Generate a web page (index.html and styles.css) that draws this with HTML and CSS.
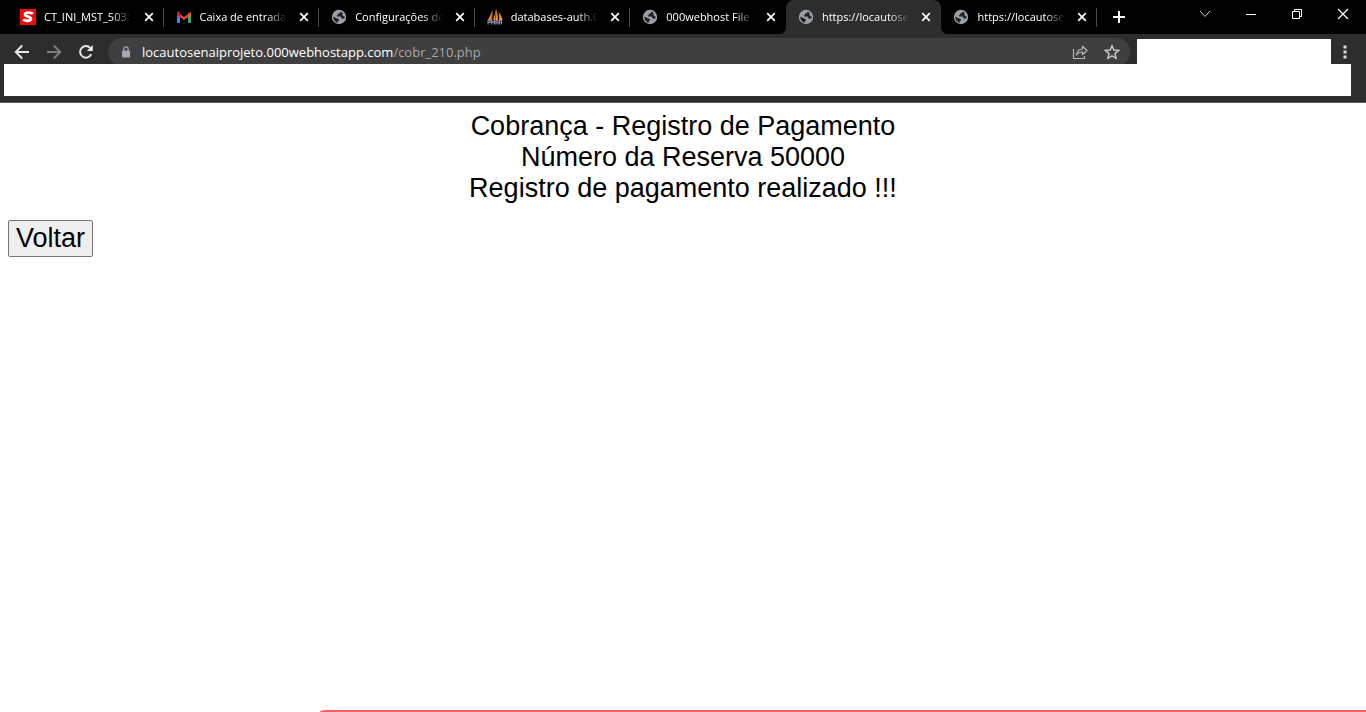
FILE: index.html
```html
<!DOCTYPE html>
<html lang="pt-BR">
<head>
<meta charset="utf-8">
<title>Cobrança - Registro de Pagamento</title>
<link rel="stylesheet" href="styles.css">
</head>
<body>
<svg class="defs" aria-hidden="true">
  <symbol id="globe" viewBox="0 0 16 16">
    <circle cx="8" cy="8" r="7.200" fill="#9aa0a6"/>
    <path d="M9.500 2.600L9 4.200 7 4.600 6.800 6 5.600 6.800 6.400 7.600h3.200l1 1.800 1.300.4 1.600-.6.200-1.600-1.300-.3-1-1.300.3-1.500L10.600 3z" fill="#202124"/>
    <path d="M2.400 7.600L5.500 9.300l2.200.6.300 1.800-1.300.6v1.500C4.200 13.200 2.100 10.800 2.400 7.600z" fill="#202124"/>
  </symbol>
  <symbol id="cross" viewBox="0 0 10 10"><path d="M1.200 1.200l7.600 7.600M8.800 1.200L1.200 8.800" stroke="#fff" stroke-width="1.700"/></symbol>
</svg>

<header class="browser">
  <div class="strip">
    <div class="tabs">
      <div class="tab">
        <svg class="favicon" viewBox="0 0 16 16"><rect width="16" height="16" fill="#f00a0a"/><path d="M12.900 4.700C11.600 3.600 5.500 2.500 5 5.300c-.4 2.800 6.400 2 5.900 4.700-.4 2.500-5.900 2-7.700.5" fill="none" stroke="#fff" stroke-width="2.800"/></svg>
        <span class="title">CT_INI_MST_503:</span>
        <button class="close" aria-label="Fechar"><svg><use href="#cross"/></svg></button>
      </div>
      <div class="tab">
        <svg class="favicon" viewBox="0 0 16 16"><path d="M1 4h3v10H2q-1 0-1-1z" fill="#4285f4"/><path d="M12 4h3v9q0 1-1 1h-2z" fill="#34a853"/><path d="M12 5l3-2v3.500l-3 2z" fill="#fbbc04"/><path d="M4 5l4 3 4-3 1.500-1.500q1.500-.5 1.500 1v1.500l-7 5-4-3z" fill="#ea4335"/><path d="M1 4q0-2 2-1.500L4 3.400v5.200L1 6.500z" fill="#c5221f"/></svg>
        <span class="title">Caixa de entrada</span>
        <button class="close" aria-label="Fechar"><svg><use href="#cross"/></svg></button>
      </div>
      <div class="tab">
        <svg class="favicon"><use href="#globe"/></svg>
        <span class="title">Configurações de</span>
        <button class="close" aria-label="Fechar"><svg><use href="#cross"/></svg></button>
      </div>
      <div class="tab">
        <svg class="favicon" viewBox="0 0 16 16"><path d="M5.500 1.500L1 11h3.800zM9 .5c-1 4-2 7-3 10.500h5C11 7 10.500 4 9 .5zM11.500 3c.7 3 .8 5 .5 8h3.500C15 8 13.500 5 11.500 3z" fill="#f08c22"/><path d="M5.500 1.500L4.800 11M9 .5L8.300 11" stroke="#6b4a2a" fill="none"/><path d="M1 15.500v-4h2.200v2H1M4.600 15.500v-4l1.500 2 1.500-2v4M9 15.500v-4h2v4M9 13.500h2M12.500 15.500v-4h2v4M12.500 13.500h2" fill="none" stroke="#8a8aac" stroke-width="1.100"/></svg>
        <span class="title">databases-auth.0</span>
        <button class="close" aria-label="Fechar"><svg><use href="#cross"/></svg></button>
      </div>
      <div class="tab before-active">
        <svg class="favicon"><use href="#globe"/></svg>
        <span class="title">000webhost File</span>
        <button class="close" aria-label="Fechar"><svg><use href="#cross"/></svg></button>
      </div>
      <div class="tab active">
        <svg class="favicon"><use href="#globe"/></svg>
        <span class="title">https://locautose</span>
        <button class="close" aria-label="Fechar"><svg><use href="#cross"/></svg></button>
      </div>
      <div class="tab after-active">
        <svg class="favicon"><use href="#globe"/></svg>
        <span class="title">https://locautose</span>
        <button class="close" aria-label="Fechar"><svg><use href="#cross"/></svg></button>
      </div>
    </div>
    <button class="new-tab" aria-label="Nova guia"><svg viewBox="0 0 12 12"><path d="M6 0v12M0 6h12" stroke="#fff" stroke-width="2"/></svg></button>
    <div class="window-controls">
      <button aria-label="Pesquisar guias"><svg viewBox="0 0 12 12"><path d="M1 3l5 5.500L11 3" fill="none" stroke="#ccc"/></svg></button>
      <button aria-label="Minimizar"><svg viewBox="0 0 12 12"><path d="M1 6.500h10" stroke="#fff"/></svg></button>
      <button aria-label="Restaurar"><svg viewBox="0 0 12 12"><path d="M1.500 3.500h7v7h-7zM3.500 3.500v-2h7v7h-2" fill="none" stroke="#fff"/></svg></button>
      <button aria-label="Fechar janela"><svg viewBox="0 0 12 12"><path d="M1 1l10 10M11 1L1 11" stroke="#fff" stroke-width="1.200"/></svg></button>
    </div>
  </div>

  <div class="toolbar">
    <nav class="nav">
      <button aria-label="Voltar página"><svg viewBox="0 0 16 16"><path d="M15 8H2M8.200 1.500L1.700 8l6.500 6.500" fill="none" stroke="#e8e8e8" stroke-width="1.900"/></svg></button>
      <button aria-label="Avançar"><svg viewBox="0 0 16 16"><path d="M1 8h13M7.800 1.500L14.300 8l-6.500 6.500" fill="none" stroke="#7c7c7c" stroke-width="1.900"/></svg></button>
      <button aria-label="Recarregar"><svg viewBox="0 0 16 16"><path d="M13.200 10.200A5.800 5.800 0 1 1 12.300 4.100" fill="none" stroke="#e8e8e8" stroke-width="2"/><path d="M14.800 1v6H8.800z" fill="#e8e8e8"/></svg></button>
    </nav>
    <div class="address">
      <svg class="lock" viewBox="0 0 10 12"><rect x="1" y="4.500" width="8" height="7" rx="1" fill="#a5aab0"/><path d="M2.800 5V3a2.200 2.200 0 0 1 4.400 0v2" fill="none" stroke="#a5aab0" stroke-width="1.200"/></svg>
      <span class="url">locautosenaiprojeto.000webhostapp.com<span class="path">/cobr_210.php</span></span>
      <button aria-label="Compartilhar"><svg viewBox="0 0 16 16"><path d="M1.500 5v9.500h11V12" fill="none" stroke="#b5b5b5" stroke-width="1.200"/><path d="M4.500 11c.4-4 2.500-5.800 6-6V2.200L15 6.500l-4.500 4.200V8c-3 0-4.600.8-6 3z" fill="none" stroke="#b5b5b5" stroke-width="1.200" stroke-linejoin="round"/></svg></button>
      <button aria-label="Favoritos"><svg viewBox="0 0 16 16"><path d="M8 1.800l1.900 4.300 4.700.4-3.600 3.100 1.100 4.600L8 11.800l-4.100 2.400L5 9.600 1.400 6.500l4.700-.4z" fill="none" stroke="#c4c4c4" stroke-width="1.500"/></svg></button>
    </div>
    <div class="extensions"></div>
    <button class="menu" aria-label="Menu"><svg viewBox="0 0 16 16"><path d="M6.500 1.500h3v3h-3zM6.500 6.500h3v3h-3zM6.500 11.500h3v3h-3z" fill="#dcdcdc"/></svg></button>
  </div>
  <div class="bookmarks"></div>
</header>

<main class="page">
  <div class="message">
    Cobrança - Registro de Pagamento<br>
    Número da Reserva 50000<br>
    Registro de pagamento realizado !!!
  </div>
  <button class="back">Voltar</button>
</main>
<div class="banner"></div>
</body>
</html>
```
FILE: styles.css
```css
* { box-sizing: border-box; }

body {
  margin: 0;
  min-height: 100vh;
  background: #fff;
  color: #000;
  font-family: "Liberation Sans", Arial, sans-serif;
}

.defs { position: absolute; width: 0; height: 0; }

svg { display: block; }

.browser {
  padding-bottom: 6px;
  background: #2d2d2d;
  border-bottom: 1px solid #5a5a5a;
  font-family: "Open Sans", "Noto Sans", sans-serif;
}

.browser button {
  display: flex;
  align-items: center;
  justify-content: center;
  flex: none;
  padding: 0;
  border: 0;
  background: none;
}

.strip {
  display: flex;
  height: 34px;
  padding-left: 8px;
  background: #000;
}

.tabs { display: flex; flex: 1; min-width: 0; }

.tab {
  position: relative;
  display: flex;
  align-items: center;
  flex: 1;
  min-width: 0;
  padding: 0 10px 0 12px;
  color: #fff;
  font-size: 11px;
  line-height: 16px;
}

.tab::after {
  content: "";
  position: absolute;
  right: 0;
  top: 8px;
  width: 1px;
  height: 19px;
  background: #4a4a4a;
}

.tab.active::after, .tab.before-active::after { display: none; }

.tab.active {
  background: #2d2d2d;
  border-radius: 8px 8px 0 0;
}

.tab.before-active { background: radial-gradient(circle at 0 0, #000 8px, #2d2d2d 9px) bottom right / 8px 8px no-repeat; }
.tab.after-active { background: radial-gradient(circle at 100% 0, #000 8px, #2d2d2d 9px) bottom left / 8px 8px no-repeat; }

.favicon { flex: none; width: 16px; height: 16px; }

.title {
  flex: 1;
  min-width: 0;
  margin: 0 4px 0 8px;
  overflow: hidden;
  white-space: nowrap;
  -webkit-mask-image: linear-gradient(to left, transparent 8px, #000 28px);
  mask-image: linear-gradient(to left, transparent 8px, #000 28px);
}

.close svg { width: 10px; height: 10px; }

.browser .new-tab {
  width: 85px;
  padding-left: 16px;
  justify-content: flex-start;
}

.new-tab svg { width: 12px; height: 12px; }

.window-controls { display: flex; height: 28px; }
.window-controls button { width: 46px; }
.window-controls svg { width: 12px; height: 12px; }

.toolbar {
  display: flex;
  height: 30px;
  overflow: hidden;
}

.toolbar svg { width: 16px; height: 16px; }

.nav { display: flex; height: 36px; padding: 0 6px; }
.nav button { width: 32px; }

.address {
  display: flex;
  align-items: center;
  flex: 1;
  min-width: 0;
  height: 28px;
  margin-top: 4px;
  padding: 0 2px 0 13px;
  border-radius: 14px;
  background: #3f3f3f;
}

.toolbar .lock { width: 10px; height: 12px; }

.url {
  flex: 1;
  min-width: 0;
  margin-left: 11px;
  overflow: hidden;
  color: #fff;
  font-size: 13px;
  line-height: 20px;
  white-space: nowrap;
}

.path { color: #a8a8a8; }

.address button { width: 32px; }

.extensions {
  flex: none;
  width: 194px;
  margin: 5px 0 0 7px;
  background: #fff;
}

.browser .menu { width: 35px; height: 36px; padding-right: 8px; }

.bookmarks {
  height: 32px;
  margin: 0 15px 0 4px;
  background: #fff;
}

.page {
  padding: 8px;
  font-size: 27px;
  line-height: 31px;
}

.message { margin-bottom: 16px; text-align: center; }

.back {
  padding: 2px 7px;
  border: 1px solid #767676;
  border-radius: 2px;
  background: #efefef;
  color: #000;
  font: inherit;
}

.banner {
  position: fixed;
  right: 0;
  bottom: 0;
  left: 320px;
  height: 2px;
  border-radius: 6px 0 0 0 / 2px 0 0 0;
  background: #ff5f5f;
}
```
